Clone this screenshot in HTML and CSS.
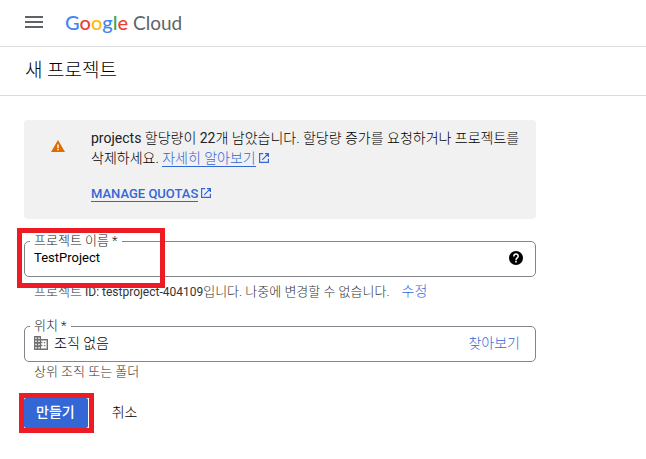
FILE: index.html
```html
<!DOCTYPE html>
<html lang="ko">
<head>
<meta charset="utf-8">
<meta name="viewport" content="width=device-width, initial-scale=1">
<title>새 프로젝트</title>
<link rel="stylesheet" href="styles.css">
</head>
<body>
<header class="topbar">
  <button class="menu" type="button" aria-label="메뉴">
    <svg width="18" height="12" viewBox="0 0 18 12"><path fill="#5f6368" d="M0 0h18v2H0zM0 5h18v2H0zM0 10h18v2H0z"/></svg>
  </button>
  <a class="logo" href="#"><span class="google"><span class="blue">G</span><span class="red">o</span><span class="yellow">o</span><span class="blue">g</span><span class="green">l</span><span class="red">e</span></span><span class="cloud">Cloud</span></a>
</header>
<div class="titlebar"><h1>새 프로젝트</h1></div>
<main class="content">
  <section class="notice">
    <svg class="warning" width="14" height="12" viewBox="0 0 14 12"><path fill="#e06c00" d="M7 0l7 12H0z"/><path fill="#f1f1f1" d="M6.2 4.4h1.6v3.5H6.2zM6.2 8.8h1.6v1.5H6.2z"/></svg>
    <div class="notice-text">
      <p><span class="latin">projects</span> 할당량이 <span class="latin">22</span>개 남았습니다. 할당량 증가를 요청하거나 프로젝트를 삭제하세요. <a href="#"><span class="underlined">자세히 알아보기</span><svg class="external" width="10" height="10" viewBox="0 0 10 10"><path fill="none" stroke="currentColor" stroke-width="1.2" d="M4.2.6H.6v8.8h8.8V5.8M6 .6h3.4V4M9.2.8L3.2 6.8"/></svg></a></p>
      <p><a class="strong" href="#"><span class="underlined">MANAGE QUOTAS</span><svg class="external" width="10" height="10" viewBox="0 0 10 10"><path fill="none" stroke="currentColor" stroke-width="1.2" d="M4.2.6H.6v8.8h8.8V5.8M6 .6h3.4V4M9.2.8L3.2 6.8"/></svg></a></p>
    </div>
  </section>
  <form class="form">
    <div class="group">
      <div class="field">
        <label for="name">프로젝트 이름 *</label>
        <input id="name" class="latin" type="text" value="TestProject">
        <button class="help" type="button" aria-label="도움말">
          <svg width="14" height="14" viewBox="0 0 14 14"><circle cx="7" cy="7" r="7" fill="#000"/><path fill="none" stroke="#fff" stroke-width="1.5" d="M4.8 5.5C4.8 2.3 9.2 2.4 9.2 5.2 9.2 6.8 7 6.9 7 8.9"/><path fill="#fff" d="M6.2 9.8h1.6v1.6H6.2z"/></svg>
        </button>
      </div>
      <p class="hint">프로젝트 <span class="project-id">ID: testproject-404109</span>입니다. 나중에 변경할 수 없습니다.<button class="edit" type="button">수정</button></p>
      <span class="mark mark-name"></span>
    </div>
    <div class="group">
      <div class="field">
        <label for="place">위치 *</label>
        <svg class="building" width="14" height="14" viewBox="0 0 14 14"><path fill="#707070" fill-rule="evenodd" d="M0 0h7v3h7v11H0zM1.3 1.6V3h1.4V1.6zM4.3 1.6V3h1.4V1.6zM1.3 4.6V6h1.4V4.6zM4.3 4.6V6h1.4V4.6zM1.3 7.8v1.4h1.4V7.8zM4.3 7.8v1.4h1.4V7.8zM1.3 11v1.4h1.4V11zM4.3 11v1.4h1.4V11zM7 4.4v1.4h1.4v1.5H7v1.4h1.4v1.5H7v2.4h5.6V4.4zM9.9 5.9h1.4v1.3H9.9zM9.9 8.9h1.4v1.3H9.9z"/></svg>
        <input id="place" type="text" value="조직 없음">
        <button class="browse" type="button">찾아보기</button>
      </div>
      <p class="hint">상위 조직 또는 폴더</p>
    </div>
    <div class="actions">
      <div class="primary-wrap">
        <button class="primary" type="submit">만들기</button>
        <span class="mark mark-create"></span>
      </div>
      <button class="cancel" type="button">취소</button>
    </div>
  </form>
</main>
</body>
</html>
```
FILE: styles.css
```css
* { box-sizing: border-box; }
body {
  margin: 0;
  background: #fff;
  color: #000;
  font: 300 14px/20px Roboto, "Noto Sans CJK KR", sans-serif;
}
h1, p { margin: 0; font-weight: 300; }
button { padding: 0; border: 0; background: none; font: inherit; color: inherit; cursor: pointer; }
svg { display: block; }
a { color: #3367d6; text-decoration: none; }

.topbar {
  display: flex;
  align-items: center;
  gap: 22px;
  height: 47px;
  padding: 0 25px 2px;
  border-bottom: 1px solid #dadce0;
}
.logo { display: flex; align-items: baseline; gap: 5px; font: 20px/24px Lato, sans-serif; }
.google { font-weight: 500; }
.blue { color: #4285f4; }
.red { color: #ea4335; }
.yellow { color: #fbbc04; }
.green { color: #34a853; }
.cloud { color: #5f6368; font-size: 19px; }

.titlebar {
  display: flex;
  align-items: center;
  height: 49px;
  padding: 0 25px;
  border-bottom: 1px solid #dadce0;
}
h1 { font-size: 19px; line-height: 24px; }

.content { max-width: 560px; padding: 24px; }

.notice {
  display: flex;
  gap: 26px;
  padding: 8px 16px 15px 27px;
  border-radius: 4px;
  background: #f1f1f1;
}
.warning { flex: none; margin-top: 12px; }
.notice-text { display: grid; gap: 15px; }
.latin { font-weight: 400; }
.notice .latin { color: #202124; }
.underlined { border-bottom: 1px solid #3367d6; }
.external { display: inline-block; margin-left: 3px; }
.strong { font-size: 13px; font-weight: 500; }

.form { margin-top: 22px; }
.group { position: relative; margin-bottom: 24px; }
.field {
  position: relative;
  display: flex;
  align-items: center;
  height: 36px;
  padding: 0 12px 2px 9px;
  border: 1px solid #80868b;
  border-radius: 5px;
}
.field label {
  position: absolute;
  top: -10px;
  left: 5px;
  padding: 0 4px;
  background: #fff;
  color: #222;
  font-size: 13px;
  line-height: 18px;
}
.field input {
  flex: 1;
  min-width: 0;
  padding: 0;
  border: 0;
  outline: 0;
  background: none;
  color: #000;
  font: inherit;
}
.field .latin { font-size: 13px; font-weight: 400; }
.building { margin-right: 6px; }
.browse { margin-right: 3px; color: #3367d6; }
.hint { margin-top: 4px; padding-left: 10px; color: #333; font-size: 13px; }
.group + .group { margin-bottom: 16px; }
.group + .group .hint { margin-top: 0; }
.project-id { font-size: 12px; font-weight: 400; }
.edit { margin-left: 12px; color: #3367d6; font-size: 14px; }

.actions { display: flex; align-items: center; gap: 24px; }
.primary-wrap { position: relative; }
.primary {
  display: block;
  height: 30px;
  padding: 0 13px 2px 12px;
  border-radius: 2px;
  background: #3367d6;
  color: #fff;
  font-weight: 500;
}
.cancel { padding-bottom: 2px; }

.mark { position: absolute; border: 5px solid #ed1c24; pointer-events: none; }
.mark-name { top: -13px; left: -7px; width: 148px; height: 60px; }
.mark-create { inset: -5px -6px -5px -5px; }
```
